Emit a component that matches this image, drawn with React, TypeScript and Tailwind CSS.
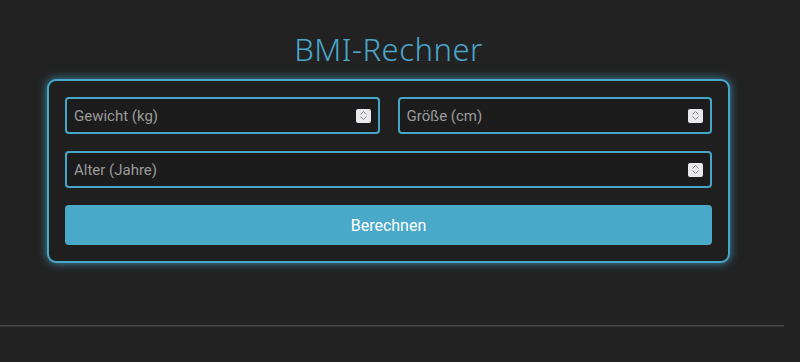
import React from 'react';

function Spinner() {
  return (
    <span className="pointer-events-none absolute right-[9px] top-1/2 flex h-[14px] w-[15px] -translate-y-1/2 flex-col items-center justify-center gap-[1px] rounded-[2px] bg-[#e9e9ed]">
      <svg width="7" height="4" viewBox="0 0 7 4" fill="none">
        <path d="M0.5 3.5 L3.5 0.5 L6.5 3.5" stroke="#8a8a8a" strokeWidth="1" />
      </svg>
      <svg width="7" height="4" viewBox="0 0 7 4" fill="none">
        <path d="M0.5 0.5 L3.5 3.5 L6.5 0.5" stroke="#8a8a8a" strokeWidth="1" />
      </svg>
    </span>
  );
}

function Field({ placeholder }: { placeholder: string }) {
  return (
    <div className="relative min-w-0 flex-1">
      <input
        type="text"
        placeholder={placeholder}
        className="block h-[37px] w-full rounded-[4px] border-2 border-[#45a6c9] bg-[#1c1c1c] px-[7px] text-[15px] text-white placeholder-[#9b9b9b] outline-none"
        style={{ fontFamily: 'Roboto, sans-serif' }}
      />
      <Spinner />
    </div>
  );
}

export default function App() {
  return (
    <div className="h-[362px] w-[800px] overflow-hidden bg-[#222222]" style={{ fontFamily: 'Roboto, sans-serif' }}>
      <div className="w-[784px]">
        <div className="w-[777px] pt-[31px]">
          <h1
            className="text-center text-[31px] font-light leading-[36px] tracking-[0.5px] text-[#4aa6cb]"
            style={{ fontFamily: '"Noto Sans", sans-serif' }}
          >
            BMI-Rechner
          </h1>
          <div className="mx-auto mt-[12px] w-[683px] rounded-[9px] border-2 border-[#46a8cb] bg-[#1f1f1f] p-[16px] shadow-[0_0_10px_rgba(74,168,203,0.8)]">
            <div className="flex gap-[18px]">
              <Field placeholder="Gewicht (kg)" />
              <Field placeholder="Größe (cm)" />
            </div>
            <div className="mt-[17px] flex">
              <Field placeholder="Alter (Jahre)" />
            </div>
            <button
              type="button"
              className="mt-[17px] flex h-[40px] w-full items-center justify-center rounded-[4px] bg-[#4aa9c9] pt-[1px] text-[16px] text-white"
            >
              Berechnen
            </button>
          </div>
        </div>
        <div className="mt-[62px] h-[2px] border-t border-[#474747] bg-[#383838]" />
      </div>
    </div>
  );
}
